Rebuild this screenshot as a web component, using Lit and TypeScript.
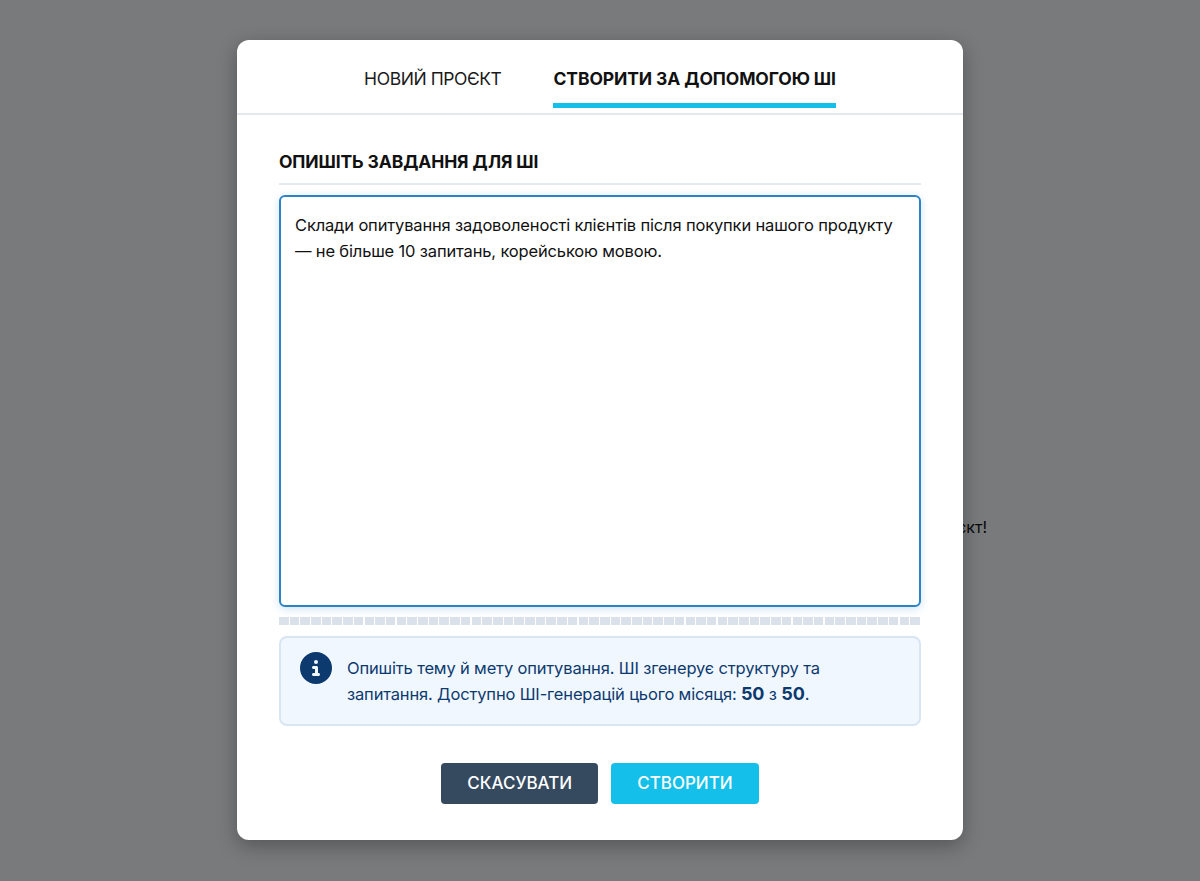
import { LitElement, html, css } from "lit";
import { customElement } from "lit/decorators.js";

@customElement("app-root")
export class AppRoot extends LitElement {
  static styles = css`
    :host {
      display: block;
      height: 881px;
      position: relative;
      overflow: hidden;
      background: #f3f5f8;
      font-family: Inter, "Noto Sans", sans-serif;
      color: #111;
    }
    .behind {
      position: absolute;
      top: 518px;
      right: 213px;
      font-size: 16px;
      line-height: 19px;
      color: #111;
      white-space: nowrap;
    }
    .overlay {
      position: absolute;
      inset: 0;
      background: rgba(0, 0, 0, 0.5);
      display: flex;
      align-items: flex-start;
      justify-content: center;
      padding-top: 40px;
    }
    .modal {
      width: 726px;
      height: 800px;
      background: #fff;
      border-radius: 12px;
      box-shadow: 0 6px 20px rgba(0, 0, 0, 0.3);
      display: flex;
      flex-direction: column;
      box-sizing: border-box;
    }
    .tabs {
      display: flex;
      justify-content: center;
      gap: 52px;
      height: 75px;
      box-sizing: border-box;
      border-bottom: 2px solid #e4e8ef;
    }
    .tab {
      font-size: 17.5px;
      line-height: 22px;
      padding-top: 28px;
      height: 68px;
      box-sizing: border-box;
      color: #1a1a1a;
      letter-spacing: -0.43px;
    }
    .tab.active {
      font-weight: 700;
      color: #111;
      border-bottom: 5px solid #14c0e9;
      letter-spacing: -0.1px;
    }
    .body {
      flex: 1;
      display: flex;
      flex-direction: column;
      padding: 36px 42px 36px;
    }
    .heading {
      font-size: 17.5px;
      line-height: 22px;
      font-weight: 700;
      color: #111;
      padding-bottom: 10px;
      border-bottom: 2px solid #e4e8ef;
      margin-bottom: 10px;
      letter-spacing: -0.12px;
    }
    .prompt {
      display: block;
      width: 100%;
      height: 412px;
      box-sizing: border-box;
      border: 2px solid #2a84c6;
      border-radius: 6px;
      padding: 15px 14px;
      font: 400 16.5px/26px Inter, "Noto Sans", sans-serif;
      letter-spacing: -0.16px;
      color: #111;
      resize: none;
      outline: none;
      box-shadow: 0 2px 8px rgba(31, 127, 196, 0.22);
      margin: 0;
    }
    .meter {
      height: 8px;
      margin-top: 10px;
      background: repeating-linear-gradient(
        90deg,
        #dbe1ea 0 9.5px,
        transparent 9.5px 10.7px
      );
    }
    .info {
      display: flex;
      gap: 15px;
      margin-top: 11px;
      height: 90px;
      box-sizing: border-box;
      padding: 14px 19px;
      background: #f0f7ff;
      border: 2px solid #d8e5f3;
      border-radius: 8px;
      color: #0d3a6e;
      font-size: 16.5px;
      letter-spacing: -0.16px;
      line-height: 26px;
    }
    .info svg {
      flex: none;
      width: 32px;
      height: 32px;
    }
    .info b {
      font-weight: 700;
      font-size: 18px;
    }
    .info p {
      margin: 3px 0 0;
    }
    .actions {
      display: flex;
      justify-content: center;
      gap: 13px;
      margin-top: auto;
    }
    .btn {
      height: 41px;
      border: none;
      border-radius: 4px;
      padding: 0 26px;
      font: 500 17px/41px Inter, "Noto Sans", sans-serif;
      color: #fff;
    }
    .cancel {
      background: #35495f;
    }
    .create {
      background: #14c0e9;
    }
  `;

  render() {
    return html`
      <div class="behind">Створіть свій перший проєкт!</div>
      <div class="overlay">
        <div class="modal">
          <div class="tabs">
            <div class="tab">НОВИЙ ПРОЄКТ</div>
            <div class="tab active">СТВОРИТИ ЗА ДОПОМОГОЮ ШІ</div>
          </div>
          <div class="body">
            <div class="heading">ОПИШІТЬ ЗАВДАННЯ ДЛЯ ШІ</div>
            <textarea
              class="prompt"
              .value=${"Склади опитування задоволеності клієнтів після покупки нашого продукту — не більше 10 запитань, корейською мовою."}
            ></textarea>
            <div class="meter"></div>
            <div class="info">
              <svg viewBox="0 0 512 512" aria-hidden="true">
                <path
                  fill="#0d3a6e"
                  d="M256 512A256 256 0 1 0 256 0a256 256 0 1 0 0 512zM216 336h24V272H216c-13.3 0-24-10.7-24-24s10.7-24 24-24h48c13.3 0 24 10.7 24 24v88h8c13.3 0 24 10.7 24 24s-10.7 24-24 24H216c-13.3 0-24-10.7-24-24s10.7-24 24-24zm40-208a32 32 0 1 1 0 64 32 32 0 1 1 0-64z"
                ></path>
              </svg>
              <p>
                Опишіть тему й мету опитування. ШІ згенерує структуру та
                запитання. Доступно ШІ-генерацій цього місяця: <b>50</b> з
                <b>50</b>.
              </p>
            </div>
            <div class="actions">
              <button class="btn cancel">СКАСУВАТИ</button>
              <button class="btn create">СТВОРИТИ</button>
            </div>
          </div>
        </div>
      </div>
    `;
  }
}
